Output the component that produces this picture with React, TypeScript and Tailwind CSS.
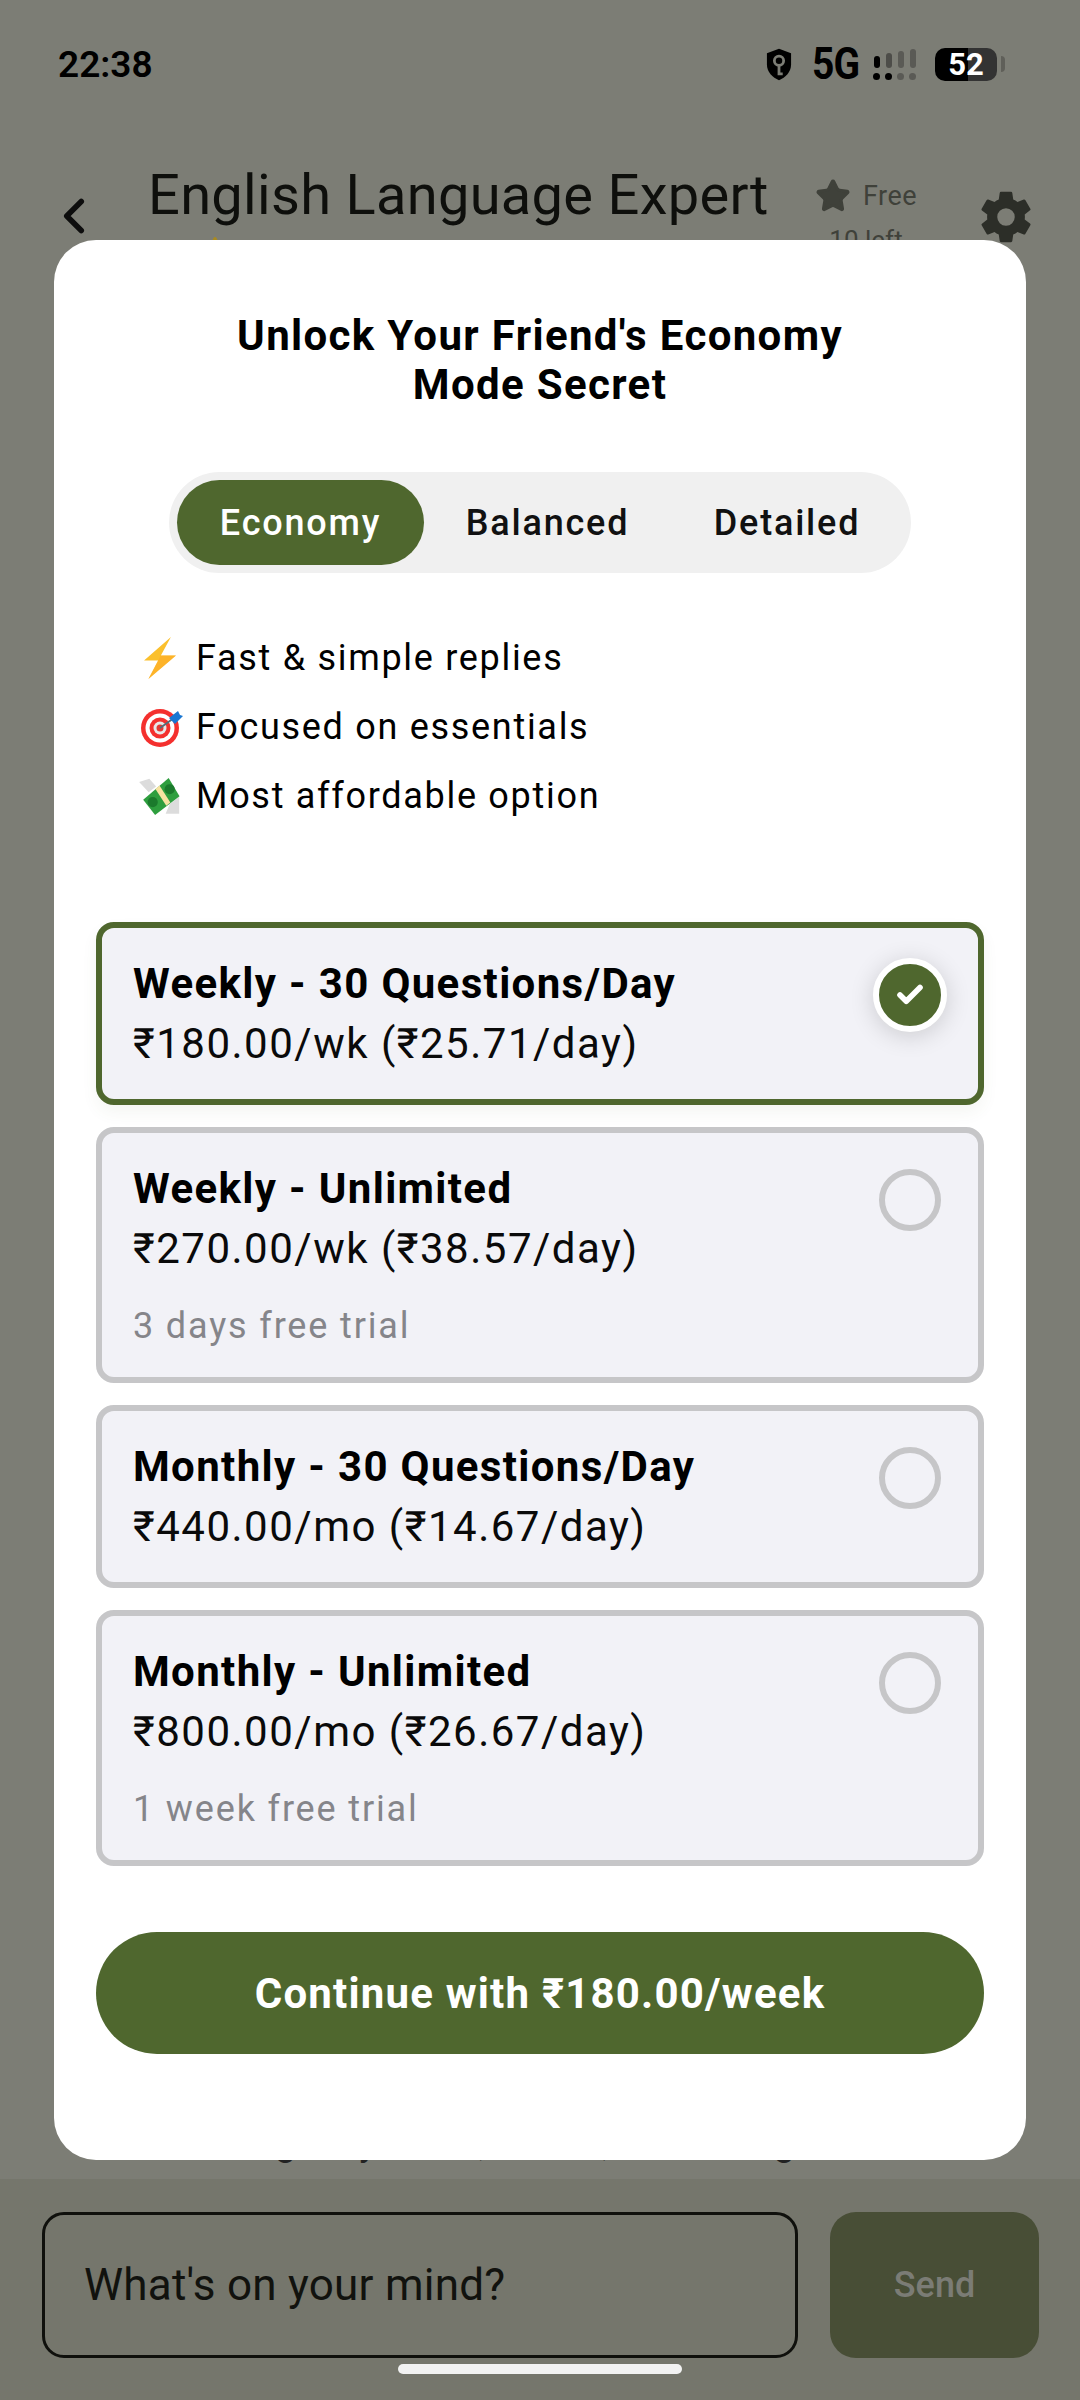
import { Check, ChevronLeft, Star } from 'lucide-react';
import { IoSettingsSharp } from 'react-icons/io5';

const primary = 'bg-[#4f672e]';

const plans = [
  { title: 'Weekly - 30 Questions/Day', price: '₹180.00/wk (₹25.71/day)', selected: true },
  { title: 'Weekly - Unlimited', price: '₹270.00/wk (₹38.57/day)', trial: '3 days free trial' },
  { title: 'Monthly - 30 Questions/Day', price: '₹440.00/mo (₹14.67/day)' },
  { title: 'Monthly - Unlimited', price: '₹800.00/mo (₹26.67/day)', trial: '1 week free trial' },
];

function Bolt() {
  return (
    <svg viewBox="0 0 95 125" className="ml-[5px] h-[42px] w-[32px]">
      <path d="M80 0 0 70h42L13 125 95 55H50z" fill="#fbc02d" />
      <path d="M50 55h45L13 125l29-55z" fill="#ffa726" opacity="0.55" />
    </svg>
  );
}

function Target() {
  return (
    <svg viewBox="0 0 42 40" className="ml-[2px] h-[40px] w-[42px]">
      <circle cx="19" cy="21" r="19" fill="#f4302e" />
      <circle cx="19" cy="21" r="14.5" fill="#fff" />
      <circle cx="19" cy="21" r="10.5" fill="#f4302e" />
      <circle cx="19" cy="21" r="6.5" fill="#e8e8e8" />
      <circle cx="19" cy="21" r="3.5" fill="#e53935" />
      <path d="M19 21 33 11" stroke="#546e7a" strokeWidth="2" />
      <path d="M28 11 37 4l2 4 3 1-8 8z" fill="#1976d2" />
    </svg>
  );
}

function Money() {
  return (
    <svg viewBox="0 0 120 112" className="h-[38px] w-[41px]">
      <path d="M0 15 30 5l20 23-22 17z" fill="#dcdcdc" />
      <path d="M118 58v50H78l12-28z" fill="#dcdcdc" />
      <path d="M12 67 87 3l32 54-72 55z" fill="#2e9e3e" />
      <path d="M48 35 60 25l32 50-12 10z" fill="#f6e3a1" />
      <circle cx="40" cy="74" r="15" fill="#1b7a2c" />
      <circle cx="90" cy="36" r="15" fill="#1b7a2c" />
    </svg>
  );
}

function PlanCard({ title, price, trial, selected }: { title: string; price: string; trial?: string; selected?: boolean }) {
  return (
    <div
      className={`flex justify-between rounded-[18px] border-[6px] bg-[#f2f2f7] pl-[31px] pr-[37px] pt-[30px] pb-[29px] ${
        selected ? 'border-[#4f672e] shadow-[0_8px_16px_rgba(79,103,46,0.06)]' : 'border-[#c6c6c8]'
      }`}
    >
      <div className="min-w-0">
        <div className="text-[42px] font-bold leading-[52px] tracking-[1.35px] text-black">{title}</div>
        <div className="mt-[8px] text-[42px] leading-[52px] tracking-[1.5px] text-[#0a0a0a]">{price}</div>
        {trial && <div className="mt-[29px] text-[36px] leading-[44px] tracking-[1.85px] text-[#85858a]">{trial}</div>}
      </div>
      {selected ? (
        <div className={`-mr-[6px] flex h-[74px] w-[74px] items-center justify-center rounded-full border-[6px] border-white ${primary} shadow-[0_4px_24px_rgba(0,0,0,0.16)]`}>
          <Check size={30} color="#fff" strokeWidth={4.5} />
        </div>
      ) : (
        <div className="mt-[6px] h-[62px] w-[62px] rounded-full border-[6px] border-[#c6c6c8]" />
      )}
    </div>
  );
}

export default function App() {
  return (
    <div className="relative flex h-[2400px] w-[1080px] flex-col overflow-hidden bg-[#7c7d75] font-['Roboto',sans-serif]">
      {/* page behind the sheet */}
      <div className="flex h-[128px] items-center justify-between pl-[58px] pr-[75px]">
        <span className="text-[37px] font-semibold leading-none text-black">22:38</span>
        <div className="flex items-center">
          <svg viewBox="0 0 28 34" className="h-[33px] w-[26px]">
            <path d="M14 0 27 5v12c0 8-6 14-13 17C7 31 1 25 1 17V5z" fill="#000" />
            <circle cx="14" cy="13" r="5" fill="none" stroke="#7c7d75" strokeWidth="3" />
            <path d="M14 18v9h4" fill="none" stroke="#7c7d75" strokeWidth="3" />
          </svg>
          <span className="ml-[20px] w-[45px] scale-y-[1.12] text-[39px] font-bold leading-none tracking-[-1px] text-black">5G</span>
          <div className="ml-[16px] flex items-end gap-[5px]">
            {[
              ['h-[12px]', 'bg-black'],
              ['h-[15px]', 'bg-[#4d4d49]'],
              ['h-[17px]', 'bg-[#5a5a55]'],
              ['h-[19px]', 'bg-[#5a5a55]'],
            ].map(([h, c], i) => (
              <div key={i} className="flex w-[7px] flex-col items-center gap-[5px]">
                <div className={`w-[6px] rounded-full ${h} ${c}`} />
                <div className={`h-[7px] w-[7px] rounded-full ${i < 2 ? 'bg-black' : 'bg-[#5a5a55]'}`} />
              </div>
            ))}
          </div>
          <div className="ml-[19px] flex h-[33px] w-[62px] items-center justify-center rounded-[10px] bg-[linear-gradient(90deg,#000_0%,#000_53%,#333_53%,#333_100%)] text-[31px] font-bold leading-none text-white">
            52
          </div>
          <div className="ml-[4px] h-[16px] w-[4px] rounded-r-sm bg-[#5f5f59]" />
        </div>
      </div>

      <div className="flex h-[112px] items-start pl-[45px]">
        <ChevronLeft size={58} color="#0d0d0d" strokeWidth={2.3} className="mt-[59px]" />
        <div className="ml-[45px] mt-[34px] w-[632px] whitespace-nowrap text-[56px] leading-[66px] tracking-[0.3px] text-[#0e0f0c]">
          English Language Expert
        </div>
        <div className="ml-[36px] mt-[48px] flex w-[100px] flex-col items-center">
          <div className="flex items-center gap-[12px]">
            <Star size={36} fill="#3f413a" color="#3f413a" />
            <span className="text-[27px] tracking-[0.5px] text-[#3f413a]">Free</span>
          </div>
          <span className="mt-[4px] text-[26px] text-[#3f413a]">10 left</span>
        </div>
        <IoSettingsSharp size={56} color="#2c2e28" className="ml-[62px] mt-[61px]" />
      </div>

      {/* rating stars poke out above the sheet */}
      <Star size={26} fill="#a98a20" color="#a98a20" className="absolute left-[202px] top-[236px]" />

      <div className="flex-1" />
      <div className="-mt-[10px] h-[51px] whitespace-nowrap pl-[275px] text-[38px] leading-[28px] text-[#222]">
        gently listen, reflect, and change
      </div>

      <div className="relative flex h-[221px] gap-[32px] bg-[#75766c] pl-[42px] pr-[41px] pt-[33px]">
        <div className="flex h-[146px] w-[756px] items-center rounded-[22px] border-[3px] border-[#0f100c] pl-[39px] text-[44px] tracking-[0.25px] text-[#11120e]">
          What's on your mind?
        </div>
        <div className="flex h-[146px] w-[209px] items-center justify-center rounded-[26px] bg-[#484e36] text-[36px] font-medium text-[#7b7c75]">
          Send
        </div>
        <div className="absolute bottom-[26px] left-[398px] h-[10px] w-[284px] rounded-[5px] bg-[#f2f2f2]" />
      </div>

      {/* plan sheet */}
      <div className="absolute left-[54px] top-[240px] flex h-[1920px] w-[972px] flex-col rounded-[42px] bg-white px-[42px] pt-[71px]">
        <h1 className="text-center text-[42px] font-bold leading-[49px] tracking-[1.35px] text-black">
          Unlock Your Friend's Economy
          <br />
          Mode Secret
        </h1>

        <div className="mt-[63px] flex h-[101px] w-[742px] items-center self-center rounded-full bg-[#f0f0f0] pl-[8px] pr-[8px]">
          <div className={`flex h-[85px] w-[247px] items-center justify-center rounded-full ${primary} text-[36px] font-medium tracking-[1.8px] text-white`}>
            Economy
          </div>
          <div className="flex-1 text-center text-[36px] font-medium tracking-[1.8px] text-[#111]">Balanced</div>
          <div className="w-[232px] text-center text-[36px] font-medium tracking-[1.8px] text-[#111]">Detailed</div>
        </div>

        <ul className="ml-[43px] mt-[64px] flex flex-col gap-[27px] text-[36px] leading-[42px] tracking-[1.7px] text-black">
          <li className="flex items-center">
            <span className="flex w-[57px]"><Bolt /></span>Fast &amp; simple replies
          </li>
          <li className="flex items-center">
            <span className="flex w-[57px]"><Target /></span>Focused on essentials
          </li>
          <li className="flex items-center">
            <span className="flex w-[57px]"><Money /></span>Most affordable option
          </li>
        </ul>

        <div className="mt-[105px] flex flex-col gap-[22px]">
          {plans.map((p) => (
            <PlanCard key={p.title} {...p} />
          ))}
        </div>

        <button className={`mt-[66px] h-[122px] rounded-full ${primary} text-[42px] font-bold tracking-[1.2px] text-white`}>
          Continue with ₹180.00/week
        </button>
      </div>
    </div>
  );
}
